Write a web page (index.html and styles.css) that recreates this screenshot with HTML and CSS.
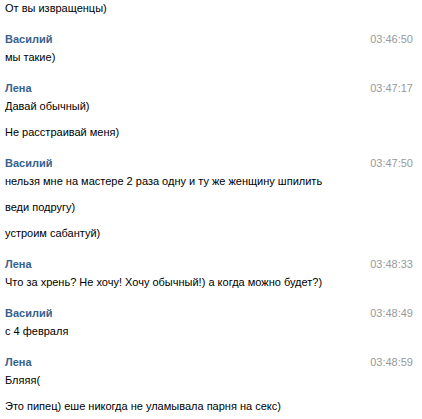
FILE: index.html
```html
<!DOCTYPE html>
<html>
<head>
<meta charset="utf-8">
<link rel="stylesheet" href="styles.css">
</head>
<body>
<div class="chat">
  <div class="block first">
    <div class="msg">От вы извращенцы)</div>
  </div>
  <div class="block">
    <div class="head"><span class="name">Василий</span><span class="time">03:46:50</span></div>
    <div class="msg">мы такие)</div>
  </div>
  <div class="block">
    <div class="head"><span class="name">Лена</span><span class="time">03:47:17</span></div>
    <div class="msg">Давай обычный)</div>
    <div class="msg">Не расстраивай меня)</div>
  </div>
  <div class="block">
    <div class="head"><span class="name">Василий</span><span class="time">03:47:50</span></div>
    <div class="msg">нельзя мне на мастере 2 раза одну и ту же женщину шпилить</div>
    <div class="msg">веди подругу)</div>
    <div class="msg">устроим сабантуй)</div>
  </div>
  <div class="block">
    <div class="head"><span class="name">Лена</span><span class="time">03:48:33</span></div>
    <div class="msg">Что за хрень? Не хочу! Хочу обычный!) а когда можно будет?)</div>
  </div>
  <div class="block">
    <div class="head"><span class="name">Василий</span><span class="time">03:48:49</span></div>
    <div class="msg">с 4 февраля</div>
  </div>
  <div class="block">
    <div class="head"><span class="name">Лена</span><span class="time">03:48:59</span></div>
    <div class="msg">Бляяя(</div>
    <div class="msg">Это пипец) еше никогда не уламывала парня на секс)</div>
  </div>
</div>
</body>
</html>
```
FILE: styles.css
```css
html, body {
  margin: 0;
  padding: 0;
  background: #ffffff;
}
body {
  font-family: "Liberation Sans", Arial, sans-serif;
  font-size: 11px;
  color: #000000;
}
.chat {
  padding: 0 9px 0 5px;
  display: flex;
  flex-direction: column;
}
.block {
  display: flex;
  flex-direction: column;
  padding-top: 15px;
}
.block.first {
  padding-top: 0;
}
.head {
  display: flex;
  justify-content: space-between;
  align-items: center;
  line-height: 16px;
  height: 16px;
  margin-bottom: 2px;
}
.name {
  font-weight: bold;
  color: #36618c;
}
.time {
  color: #999999;
}
.msg {
  line-height: 16px;
  height: 16px;
  white-space: nowrap;
}
.msg + .msg {
  margin-top: 10px;
}
```
